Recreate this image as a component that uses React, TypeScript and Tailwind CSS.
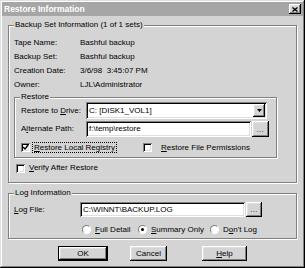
import React from 'react';

const raised = 'bg-[#d4d4d4] shadow-[inset_-1px_-1px_0_#000000,inset_1px_1px_0_#ffffff,inset_-2px_-2px_0_#808080,inset_2px_2px_0_#dfdfdf]';
const sunken = 'bg-white shadow-[inset_1px_1px_0_#808080,inset_-1px_-1px_0_#ffffff,inset_2px_2px_0_#000000,inset_-2px_-2px_0_#dfdfdf]';
const etched = 'border border-[#808080] shadow-[inset_1px_1px_0_#ffffff,1px_1px_0_#ffffff]';

const Group = ({ label, className, children }: { label: string; className: string; children: React.ReactNode }) => (
    <div className={`relative ${etched} ${className}`}>
        <span className="absolute -top-[6px] left-[5px] bg-[#d4d4d4] px-[1px] leading-[10px] whitespace-nowrap">{label}</span>
        {children}
    </div>
);

const Check = ({ checked }: { checked?: boolean }) => (
    <div className={`w-[9px] h-[9px] shrink-0 flex items-center justify-center ${sunken}`}>
        {checked && (
            <svg width="7" height="7" viewBox="0 0 7 7">
                <polyline points="1,3 3,5 6,1" fill="none" stroke="#000" strokeWidth="1.4" />
            </svg>
        )}
    </div>
);

const Radio = ({ checked }: { checked?: boolean }) => (
    <div className="w-[9px] h-[9px] shrink-0 rounded-full bg-white border border-t-[#808080] border-l-[#808080] border-b-[#ffffff] border-r-[#ffffff] flex items-center justify-center">
        {checked && <div className="w-[3px] h-[3px] rounded-full bg-black" />}
    </div>
);

const Dots = ({ w }: { w: string }) => (
    <div className={`${w} h-full shrink-0 flex items-end justify-center pb-[4px] ${raised}`}>
        <span className="leading-none text-[7px] tracking-[0.5px]">...</span>
    </div>
);

const u = (s: string) => <span className="underline underline-offset-[1px]">{s}</span>;

export default function App() {
    return (
        <div className="w-[305px] h-[268px] bg-[#d4d4d4] p-[2px] flex flex-col font-['Liberation_Sans',Arial,sans-serif] text-[8px] text-black shadow-[inset_-1px_-1px_0_#000000,inset_1px_1px_0_#dfdfdf,inset_-2px_-2px_0_#808080,inset_2px_2px_0_#ffffff]">
            {/* title bar */}
            <div className="h-[14px] bg-[#a6a6a6] flex items-center justify-between pl-[2px] pr-[2px]">
                <span className="text-white font-bold text-[8.5px] leading-none">Restore Information</span>
                <div className={`w-[12px] h-[10px] flex items-center justify-center ${raised}`}>
                    <svg width="6" height="5" viewBox="0 0 6 5">
                        <path d="M0.5 0.5 L5.5 4.5 M5.5 0.5 L0.5 4.5" stroke="#000" strokeWidth="1.3" />
                    </svg>
                </div>
            </div>

            <div className="px-[6px] flex flex-col">
                <Group label="Backup Set Information (1 of 1 sets)" className="mt-[9px] h-[158px] pt-[10px] pl-[5px]">
                    {[
                        ['Tape Name:', 'Bashful backup'],
                        ['Backup Set:', 'Bashful backup'],
                        ['Creation Date:', '3/6/98  3:45:07 PM'],
                        ['Owner:', 'LJL\\Administrator'],
                    ].map(([k, v]) => (
                        <div key={k} className="h-[14px] flex items-center">
                            <span className="w-[66px]">{k}</span>
                            <span className="whitespace-pre">{v}</span>
                        </div>
                    ))}

                    <Group label="Restore" className="mt-[5px] w-[263px] h-[61px] pt-[4px] pl-[6px]">
                        <div className="h-[17px] flex items-center">
                            <span className="w-[65px]">Restore to {u('D')}rive:</span>
                            <div className={`w-[181px] h-full flex items-center pl-[3px] pr-[2px] ${sunken}`}>
                                <span className="flex-1">C: [DISK1_VOL1]</span>
                                <div className={`w-[12px] h-[13px] flex items-center justify-center ${raised}`}>
                                    <svg width="5" height="3" viewBox="0 0 5 3">
                                        <path d="M0 0 H5 L2.5 3 Z" fill="#000" />
                                    </svg>
                                </div>
                            </div>
                        </div>
                        <div className="mt-[2px] h-[16px] flex items-center">
                            <span className="w-[65px]">A{u('l')}ternate Path:</span>
                            <div className={`w-[165px] h-full flex items-center pl-[3px] ${sunken}`}>f:\temp\restore</div>
                            <div className="w-[1px]" />
                            <Dots w="w-[17px]" />
                        </div>
                        <div className="mt-[5px] h-[11px] flex items-center">
                            <div className="w-[122px] flex items-center">
                                <Check checked />
                                <span className="ml-[2px] border border-dotted border-black px-[1px] leading-[9px]">{u('R')}estore Local Registry</span>
                            </div>
                            <Check />
                            <span className="ml-[9px]">{u('R')}estore File Permissions</span>
                        </div>
                    </Group>

                    <div className="mt-[5px] ml-[2px] h-[10px] flex items-center">
                        <Check />
                        <span className="ml-[4px]">{u('V')}erify After Restore</span>
                    </div>
                </Group>

                <Group label="Log Information" className="mt-[10px] h-[46px] pt-[8px] pl-[5px]">
                    <div className="h-[15px] flex items-center">
                        <span className="w-[66px]">{u('L')}og File:</span>
                        <div className={`w-[165px] h-full flex items-center pl-[3px] ${sunken}`}>C:\WINNT\BACKUP.LOG</div>
                        <div className="w-[1px]" />
                        <Dots w="w-[16px]" />
                    </div>
                    <div className="mt-[7px] ml-[68px] h-[11px] flex items-center">
                        <div className="w-[56px] flex items-center">
                            <Radio />
                            <span className="ml-[4px]">{u('F')}ull Detail</span>
                        </div>
                        <div className="w-[72px] flex items-center">
                            <Radio checked />
                            <span className="ml-[4px]">{u('S')}ummary Only</span>
                        </div>
                        <div className="flex items-center">
                            <Radio />
                            <span className="ml-[4px]">D{u('o')}n't Log</span>
                        </div>
                    </div>
                </Group>

                <div className="mt-[7px] h-[15px] flex">
                    <div className="ml-[50px] w-[50px] h-full border border-black">
                        <div className={`w-full h-full flex items-center justify-center ${raised}`}>OK</div>
                    </div>
                    <div className={`ml-[22px] w-[37px] h-full flex items-center justify-center ${raised}`}>Cancel</div>
                    <div className={`ml-[35px] w-[45px] h-full flex items-center justify-center ${raised}`}>{u('H')}elp</div>
                </div>
            </div>
        </div>
    );
}
